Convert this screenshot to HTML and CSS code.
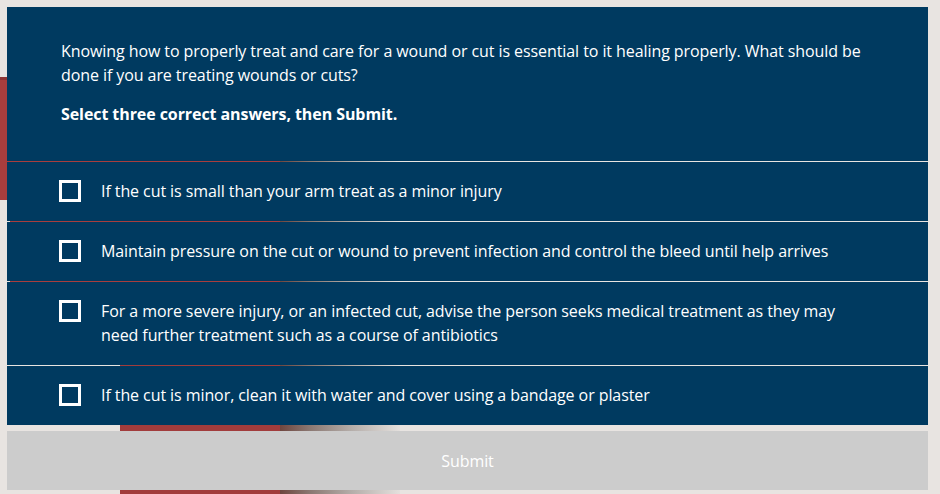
FILE: index.html
```html
<!DOCTYPE html>
<html lang="en">
<head>
<meta charset="utf-8">
<title>Wound care question</title>
<link rel="stylesheet" href="styles.css">
</head>
<body>
<main class="page">
  <section class="panel">
    <div class="question">
      <p class="prompt">Knowing how to properly treat and care for a wound or cut is essential to it healing properly. What should be done if you are treating wounds or cuts?</p>
      <p class="instruction">Select three correct answers, then Submit.</p>
    </div>
    <label class="option"><span class="box"></span><span class="label-text">If the cut is small than your arm treat as a minor injury</span></label>
    <label class="option"><span class="box"></span><span class="label-text">Maintain pressure on the cut or wound to prevent infection and control the bleed until help arrives</span></label>
    <label class="option"><span class="box"></span><span class="label-text">For a more severe injury, or an infected cut, advise the person seeks medical treatment as they may need further treatment such as a course of antibiotics</span></label>
    <label class="option"><span class="box"></span><span class="label-text">If the cut is minor, clean it with water and cover using a bandage or plaster</span></label>
  </section>
  <button class="submit" type="button">Submit</button>
</main>
</body>
</html>
```

FILE: styles.css
```css
html, body {
  margin: 0;
  padding: 0;
}
body {
  width: 940px;
  height: 494px;
  overflow: hidden;
  font-family: "Open Sans", "Liberation Sans", sans-serif;
  font-size: 16px;
  line-height: 24px;
  letter-spacing: -0.08px;
  color: #ffffff;
  background-color: #e8e4e1;
  background-image:
    linear-gradient(#8e3434, #8e3434),
    linear-gradient(#a83d3d, #a83d3d),
    linear-gradient(#a83d3d, #a83d3d),
    linear-gradient(#a23c3c, #a23c3c),
    linear-gradient(to right, #6f463f 0%, #8b7872 25%, #b5aeaa 60%, #e4e0dd 100%);
  background-repeat: no-repeat;
  background-position:
    0 77px,
    0 80px,
    10px 200px,
    120px 365px,
    280px 161px;
  background-size:
    280px 3px,
    280px 120px,
    270px 165px,
    160px 129px,
    120px 333px;
}
.page {
  padding: 7px 12px 0 7px;
  display: flex;
  flex-direction: column;
  gap: 6px;
}
.panel {
  display: flex;
  flex-direction: column;
  gap: 1px;
}
.question {
  background: #003a60;
  padding: 32px 60px 35px 54px;
}
.question p {
  margin: 0;
}
.instruction {
  margin-top: 15px !important;
  font-weight: 700;
}
.option {
  background: #003a60;
  display: flex;
  align-items: flex-start;
  gap: 20px;
  padding: 17px 60px 18px 52px;
  cursor: pointer;
}
.box {
  flex: 0 0 auto;
  width: 22px;
  height: 22px;
  box-sizing: border-box;
  border: 3px solid #ffffff;
  margin-top: 1px;
}
.label-text {
  flex: 1 1 auto;
}
.submit {
  height: 59px;
  border: 0;
  background: #cccccc;
  color: #ffffff;
  font-family: "Open Sans", "Liberation Sans", sans-serif;
  font-size: 16px;
  letter-spacing: -0.08px;
  padding: 0;
}
```
